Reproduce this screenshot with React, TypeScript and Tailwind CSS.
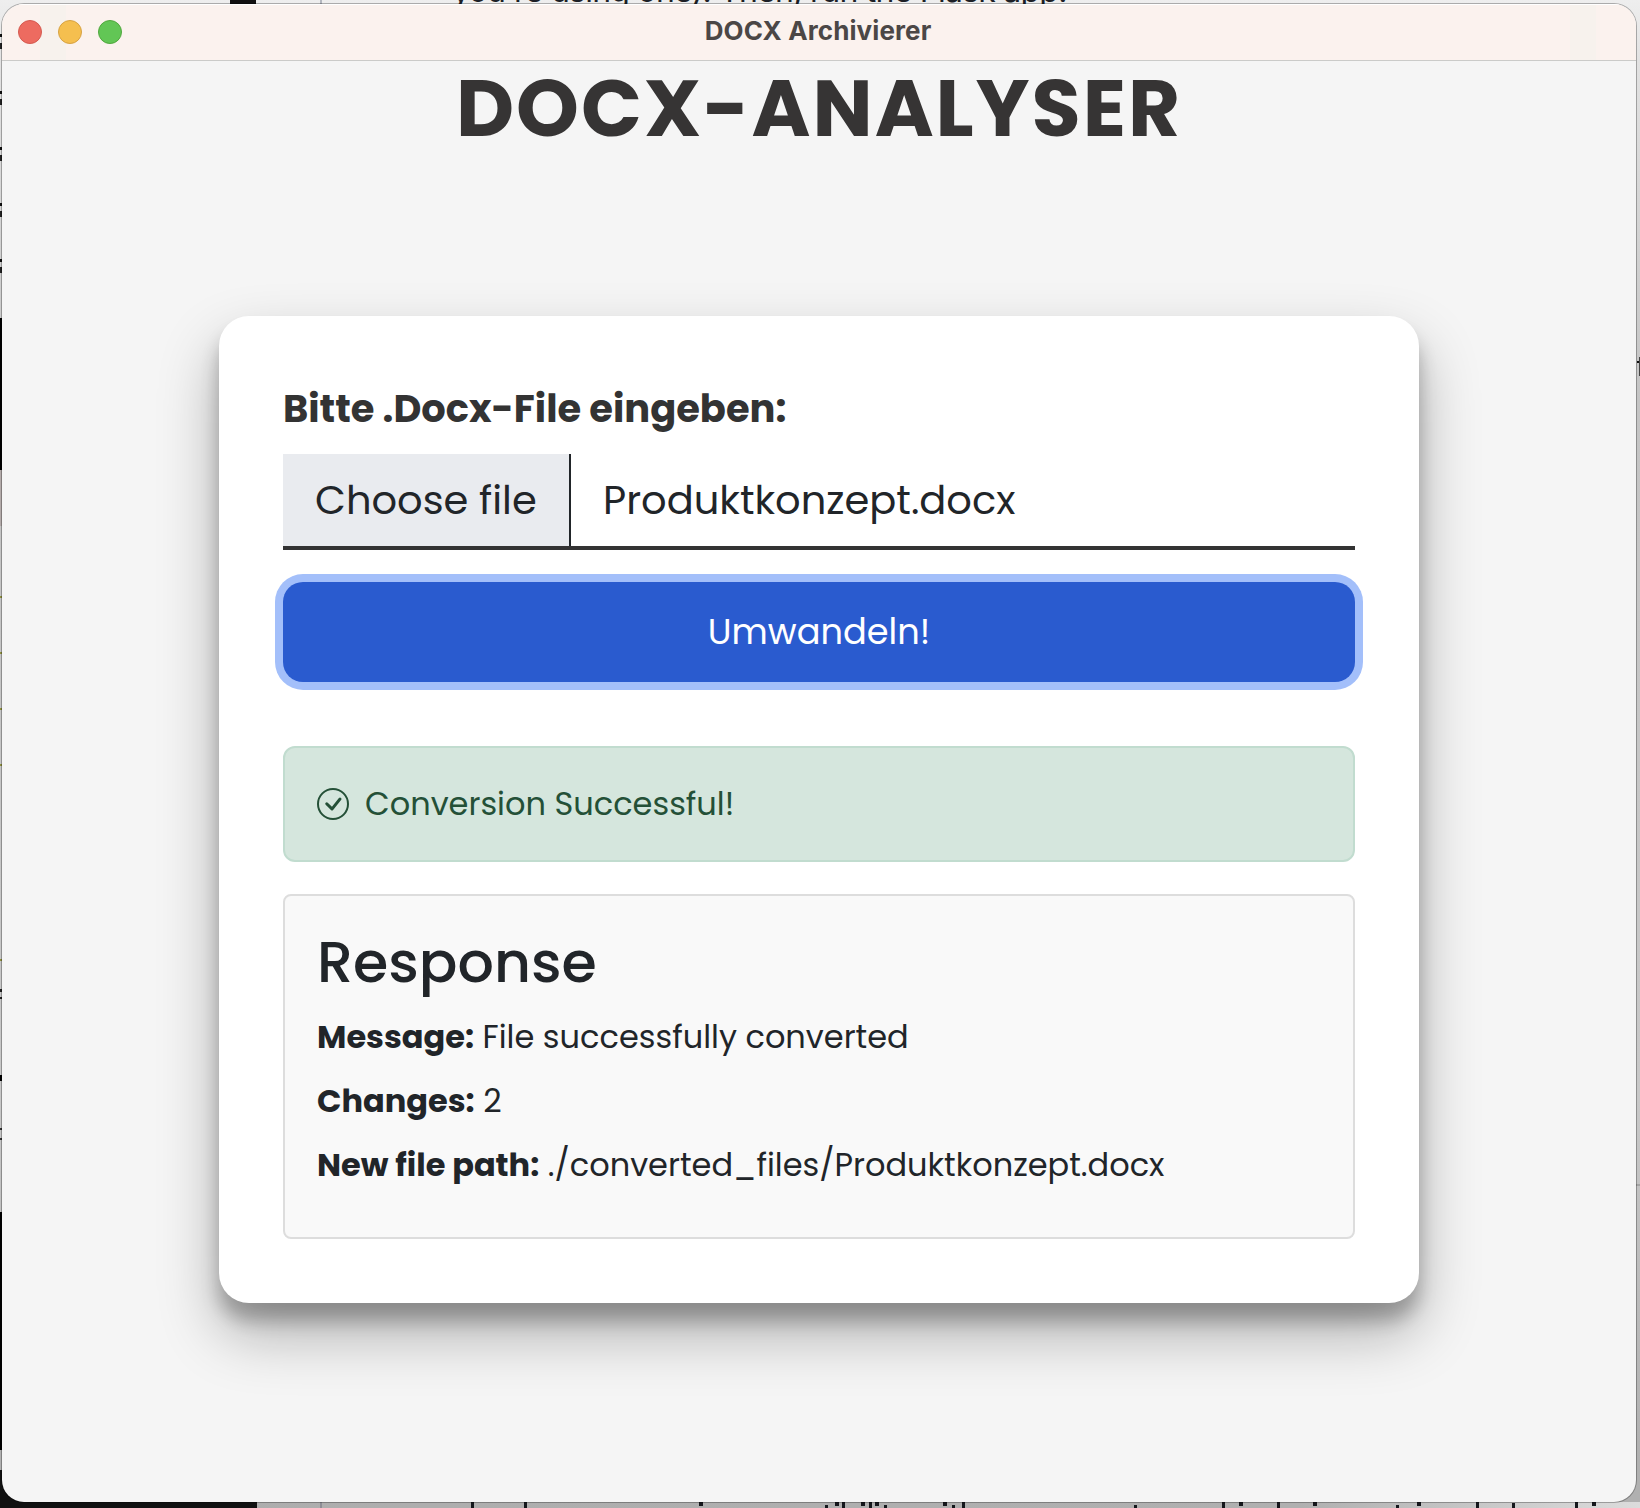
import { BsCheckCircle } from "react-icons/bs";

/** Slivers of the desktop that stay visible on the left of the window: [top, height, colour class]. */
const leftSlivers: [number, number, string][] = [
  [34, 3, "bg-[#111]"],
  [43, 6, "bg-[#222]"],
  [91, 3, "bg-[#111]"],
  [99, 6, "bg-[#222]"],
  [147, 3, "bg-[#111]"],
  [155, 6, "bg-[#222]"],
  [203, 3, "bg-[#111]"],
  [211, 6, "bg-[#222]"],
  [259, 3, "bg-[#111]"],
  [267, 6, "bg-[#222]"],
  [318, 152, "bg-black"],
  [470, 56, "bg-[#b3abaa]"],
  [596, 2, "bg-[#8f9140]"],
  [652, 2, "bg-[#8f9140]"],
  [708, 2, "bg-[#8f9140]"],
  [764, 2, "bg-[#8f9140]"],
  [959, 2, "bg-[#8f9140]"],
  [989, 3, "bg-[#222]"],
  [997, 2, "bg-[#222]"],
  [1075, 6, "bg-black"],
  [1128, 2, "bg-[#333]"],
  [1138, 2, "bg-[#333]"],
  [1212, 238, "bg-black"],
];

/** Tops of letters under the window's lower edge: [left, offset from edge, width]. */
const bottomMarks: [number, number, number][] = [
  [471, 0, 3], [524, 0, 3], [699, 0, 4], [825, 3, 3], [835, 0, 4], [842, 0, 3],
  [861, 0, 4], [869, 0, 3], [875, 0, 4], [884, 3, 3], [943, 0, 4], [952, 3, 3],
  [962, 0, 3], [1134, 3, 3], [1222, 0, 3], [1239, 0, 4], [1277, 0, 3], [1313, 0, 4],
  [1396, 3, 3], [1417, 0, 4], [1476, 0, 3], [1512, 1, 3], [1575, 0, 3], [1592, 0, 4],
];

function Desktop() {
  return (
    <div className="absolute inset-0 bg-[linear-gradient(180deg,#eeeeee_0px,#e2e2e2_60px,#c4c4c4_400px,#c8c8c8_1100px,#b0b0b0_1460px)]">
      <div className="absolute left-[230px] top-0 h-1 w-[26px] bg-[#111]" />
      <div className="absolute left-[320px] top-0 h-1 w-[2px] bg-[#b4b8c0]" />
      <p className="absolute left-[452px] top-[-25px] whitespace-nowrap font-[Inter] text-[32px] leading-[32px] tracking-[-0.76px] text-[#1c1f26]">
        you're using one). Then, run the Flask app.
      </p>
      {leftSlivers.map(([top, height, color]) => (
        <div key={top} className={`absolute left-0 w-[2px] ${color}`} style={{ top, height }} />
      ))}
      <div className="absolute bottom-0 left-0 h-[38px] w-[30px] bg-[#111]" />
      <div className="absolute bottom-0 left-0 right-0 h-[6px] bg-[linear-gradient(90deg,#adadad_0px,#b0b0b0_1300px,#dcdcdc_1640px)]">
        <div className="absolute inset-y-0 left-0 w-[257px] bg-[#111]" />
        <div className="absolute inset-y-0 left-[320px] w-[2px] bg-[#8e8e96]" />
        {bottomMarks.map(([left, top, width]) => (
          <div
            key={left}
            className="absolute bg-[#15171c]"
            style={{ left, top, width, height: width === 4 ? 4 : 6 - top }}
          />
        ))}
      </div>
      <div className="absolute right-0 top-[361px] h-[2px] w-[3px] bg-[#111]" />
      <div className="absolute right-0 top-[357px] h-[19px] w-px bg-[#444]" />
      <div className="absolute right-0 top-[1184px] h-[2px] w-[4px] bg-[#a4a4a4]" />
    </div>
  );
}

function TitleBar() {
  return (
    <div className="relative flex h-[57px] shrink-0 items-center border-b border-[#cbcbc9] bg-[linear-gradient(90deg,#fbf2ee_0_38px,#f7f2ed_38px_64px,#fbf2ee_64px_1568px,#f7f2ed_1568px_1594px,#fbf2ee_1594px)] px-4 shadow-[inset_0_1px_0_#ffffff]">
      <div className="flex gap-4">
        <span className="size-6 rounded-full border border-[#d45a50] bg-[#ed6b60]" />
        <span className="size-6 rounded-full border border-[#d6a243] bg-[#f5bf4f]" />
        <span className="size-6 rounded-full border border-[#51a73e] bg-[#62c655]" />
      </div>
      <div className="absolute inset-0 flex items-center justify-center pb-[3px] pr-[2px] font-[Inter] text-[26px] font-bold tracking-[0.1px] text-[#4b4746]">
        DOCX Archivierer
      </div>
    </div>
  );
}

function FileInput() {
  return (
    <div className="mt-[17px] flex h-24 border-b-4 border-[#333333] text-[40px] text-[#212529]">
      <button className="w-72 border-r-2 border-[#212529] bg-[#e9ebef] pl-8 text-left">
        Choose file
      </button>
      <span className="flex items-center pl-8">Produktkonzept.docx</span>
    </div>
  );
}

function ResponsePanel() {
  return (
    <section className="mt-8 h-[345px] rounded-lg border-2 border-[#dddddd] bg-[#f9f9f9] p-8 text-[32px] leading-[48px] text-[#212529]">
      <h2 className="mb-[17px] text-[57.1px] font-medium leading-[68px]">Response</h2>
      <p className="mb-4">
        <strong className="font-bold">Message:</strong> File successfully converted
      </p>
      <p className="mb-4">
        <strong className="font-bold">Changes:</strong> 2
      </p>
      <p>
        <strong className="font-bold">New file path:</strong> ./converted_files/Produktkonzept.docx
      </p>
    </section>
  );
}

export default function App() {
  return (
    <div className="relative h-[1508px] w-[1640px] overflow-hidden pl-[2px] pt-1 font-[Poppins,Inter,sans-serif]">
      <Desktop />
      <div className="relative flex h-[1498px] w-[1634px] flex-col overflow-hidden rounded-[22px] bg-[#f5f5f5] shadow-[0_0_0_1px_rgba(0,0,0,0.28)]">
        <TitleBar />
        <h1 className="mt-[2px] h-[90px] text-center text-[80px] font-bold leading-[91px] tracking-[2px] text-[#363434]">
          DOCX-ANALYSER
        </h1>
        <main className="mx-auto mt-[163px] h-[987px] w-[1200px] rounded-[30px] bg-white p-16 shadow-[0_30px_60px_rgba(0,0,0,0.3),0_17px_18px_rgba(0,0,0,0.24)]">
          <label className="block text-[38.4px] font-bold leading-[57px] text-[#333333]">
            Bitte .Docx-File eingeben:
          </label>
          <FileInput />
          <button className="mt-8 block h-[100px] w-full rounded-[20px] bg-[#2a5bcf] text-[35.2px] text-white shadow-[0_0_0_8px_#a3bffa]">
            Umwandeln!
          </button>
          <div className="mt-16 flex h-[116px] items-center gap-4 rounded-xl border-2 border-[#c1dccf] bg-[#d5e6dd] px-8 text-[32px] text-[#245037]">
            <BsCheckCircle className="size-8" />
            Conversion Successful!
          </div>
          <ResponsePanel />
        </main>
      </div>
    </div>
  );
}
